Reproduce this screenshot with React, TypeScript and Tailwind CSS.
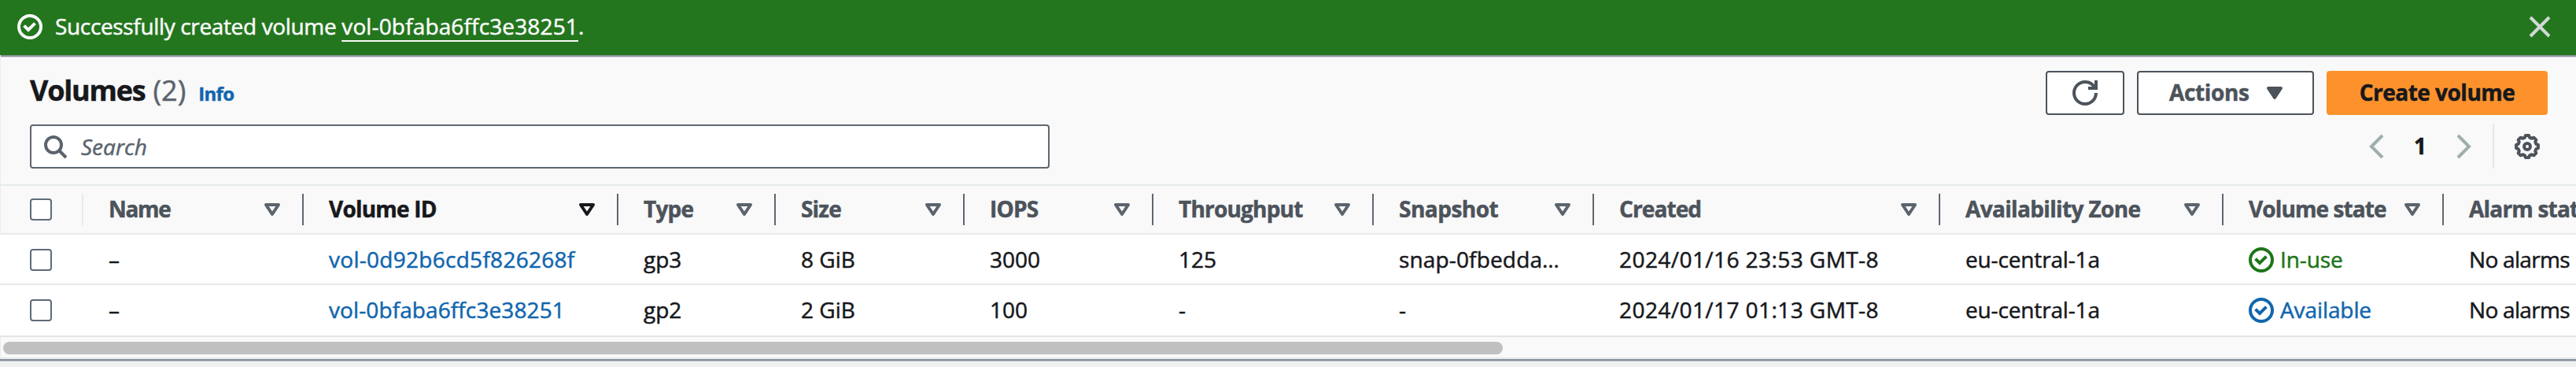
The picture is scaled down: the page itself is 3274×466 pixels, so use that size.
import type { ReactNode } from "react";

function Svg({ className, children }: { className?: string; children: ReactNode }) {
  return (
    <svg viewBox="0 0 16 16" fill="none" stroke="currentColor" strokeWidth="2" className={"size-8 shrink-0 overflow-visible " + (className ?? "")}>
      {children}
    </svg>
  );
}

const CheckCircle = () => (
  <Svg>
    <circle cx="8" cy="8" r="7" />
    <path d="m5 8 2 2 3.521-3.521" strokeLinecap="square" />
  </Svg>
);

const Caret = ({ filled, className }: { filled?: boolean; className?: string }) => (
  <Svg className={className}>
    <path d="M4 5h8l-4 6z" strokeLinejoin="round" fill={filled ? "currentColor" : "none"} />
  </Svg>
);

const gearPath = (() => {
  const at = (r: number, deg: number) => {
    const a = (deg * Math.PI) / 180;
    return `${(8 + r * Math.sin(a)).toFixed(2)} ${(8 - r * Math.cos(a)).toFixed(2)}`;
  };
  const pts: string[] = [];
  for (let i = 0; i < 8; i++) {
    const a = i * 45;
    pts.push(at(7.05, a - 8.5), at(7.05, a + 8.5), at(5.9, a + 15), at(5.9, a + 30));
  }
  return "M" + pts.join("L") + "Z";
})();

const columns: { label: string; width: string; track: string; sorted?: boolean }[] = [
  { label: "Name", width: "w-[280px]", track: "tracking-[-1.3px]" },
  { label: "Volume ID", width: "w-[400px]", track: "tracking-[-0.8px]", sorted: true },
  { label: "Type", width: "w-[200px]", track: "tracking-[-0.8px]" },
  { label: "Size", width: "w-[240px]", track: "tracking-[-0.8px]" },
  { label: "IOPS", width: "w-[240px]", track: "tracking-[-0.8px]" },
  { label: "Throughput", width: "w-[280px]", track: "tracking-[-0.8px]" },
  { label: "Snapshot", width: "w-[280px]", track: "tracking-[-0.5px]" },
  { label: "Created", width: "w-[440px]", track: "tracking-[-0.9px]" },
  { label: "Availability Zone", width: "w-[360px]", track: "tracking-[-0.65px]" },
  { label: "Volume state", width: "w-[280px]", track: "tracking-[-0.9px]" },
  { label: "Alarm state", width: "w-[280px]", track: "tracking-[-0.8px]" },
];

const cellTrack = ["", "", "", "", "", "", "tracking-[0.15px]", "tracking-[0.43px]", "tracking-[-0.15px]", "", "tracking-[-0.7px]"];

const rows = [
  ["–", "vol-0d92b6cd5f826268f", "gp3", "8 GiB", "3000", "125", "snap-0fbedda…", "2024/01/16 23:53 GMT-8", "eu-central-1a", "In-use", "No alarms"],
  ["–", "vol-0bfaba6ffc3e38251", "gp2", "2 GiB", "100", "-", "-", "2024/01/17 01:13 GMT-8", "eu-central-1a", "Available", "No alarms"],
];

const Checkbox = () => <span className="ml-[38px] size-7 rounded-[4px] border-2 border-[#5f6b7a] bg-white" />;

function Cell({ text, index, row }: { text: string; index: number; row: number }) {
  if (index === 9) {
    return (
      <span className={"flex items-center gap-2 " + (text === "In-use" ? "text-[#1d7519]" : "text-[#1166ae]")}>
        <span className="pt-0.5"><CheckCircle /></span>
        <span className="tracking-[-0.1px]">{text}</span>
      </span>
    );
  }
  if (index === 1) {
    return <a className={"text-[#1166ae] " + (row === 0 ? "tracking-[0.28px]" : "tracking-[0.1px]")}>{text}</a>;
  }
  return <span className={cellTrack[index]}>{text}</span>;
}

export default function App() {
  return (
    <div className="flex h-[466px] w-[3274px] flex-col overflow-hidden bg-[#f0f1f1] font-['Open_Sans','Noto_Sans',sans-serif] text-[28px] leading-9 text-[#17181c] [-webkit-text-stroke:0.5px]">
      <div className="flex h-[70px] shrink-0 items-center bg-[#23761e] pr-[30px] pl-[22px] text-[#fafafa]">
        <div className="-mt-1"><div className="pt-0.5"><CheckCircle /></div></div>
        <p className="ml-4 flex-1 -mt-1 tracking-[-0.35px]">
          Successfully created volume{" "}
          <a className="tracking-[0.14px] underline decoration-2 underline-offset-[7px] [text-decoration-skip-ink:none]">vol-0bfaba6ffc3e38251</a>.
        </p>
        <Svg className="-mt-0.5 text-[#d2d8d6]">
          <path d="M2 2l12 12M14 2 2 14" />
        </Svg>
      </div>

      <div className="flex h-[384px] shrink-0 flex-col border-l border-[#eceded] bg-[#f9f9f9]">
        <div className="h-0.5 shrink-0 bg-[#8f949c]" />
        <div className="h-px shrink-0 bg-[#d9dbde]" />

        <div className="mt-[17px] flex h-14 shrink-0 items-center justify-between pr-9 pl-[37px]">
          <div className="-mt-[3px] flex items-baseline leading-[48px]">
            <h1 className="text-[36px] font-bold tracking-[-1.2px]">Volumes</h1>
            <span className="ml-2.5 text-[36px] text-[#5b646d]">(2)</span>
            <a className="ml-4 text-[24px] font-bold tracking-[-0.7px] text-[#1166ae]">Info</a>
          </div>
          <div className="flex gap-4 font-bold text-[#4c535b]">
            <button className="flex h-14 w-[100px] items-center justify-center rounded-[4px] border-2 border-[#4c535b] bg-white">
              <Svg>
                <path d="M15 8c0 3.87-3.13 7-7 7s-7-3.13-7-7 3.13-7 7-7c2.79 0 5.2 1.63 6.33 4" />
                <path d="M10 5h5V0" />
              </Svg>
            </button>
            <button className="flex h-14 w-[225px] items-center rounded-[4px] border-2 border-[#4c535b] bg-white pl-[39px]">
              <span className="-mt-0.5 w-[118px] text-left tracking-[-0.35px]">Actions</span>
              <Caret filled />
            </button>
            <button className="flex h-14 w-[281px] items-center justify-center rounded-[4px] bg-[#fd922c] text-[#17181c]">
              <span className="-mt-0.5 tracking-[-0.5px]">Create volume</span>
            </button>
          </div>
        </div>

        <div className="mt-3 flex h-14 shrink-0 items-center justify-between pr-[46px] pl-[37px]">
          <div className="flex h-14 w-[1296px] items-center rounded-[4px] border-2 border-[#5f6770] bg-white pl-3.5 text-[#5b646d]">
            <Svg>
              <circle cx="7" cy="7" r="5" />
              <path d="m15 15-4.5-4.5" />
            </Svg>
            <span className="ml-[17px] italic">Search</span>
          </div>
          <div className="flex h-14 items-center">
            <Svg className="text-[#9fadad]">
              <path d="M11 1 4 8l7 7" />
            </Svg>
            <span className="-mt-0.5 w-[76px] text-center font-bold">1</span>
            <Svg className="text-[#9fadad]">
              <path d="m5 1 7 7-7 7" />
            </Svg>
            <span className="ml-[22px] h-14 w-0.5 bg-[#e4e7e7]" />
            <Svg className="ml-[26px] text-[#4c535b]">
              <path d={gearPath} strokeLinejoin="round" />
              <circle cx="8" cy="8" r="2" />
            </Svg>
          </div>
        </div>

        <div className="mt-5 -ml-px flex h-16 w-[3400px] shrink-0 items-center border-y-2 border-[#e6ebea]">
          <div className="flex h-10 w-[106px] items-center border-r-2 border-[#e6ebea]">
            <Checkbox />
          </div>
          {columns.map((c) => (
            <div key={c.label} className={"flex h-10 shrink-0 items-center justify-between border-r-2 border-[#5f6770] pr-[22px] pl-8 " + c.width}>
              <span className={"-mt-0.5 font-bold whitespace-nowrap " + c.track + (c.sorted ? " text-[#17181c]" : " text-[#4c535b]")}>{c.label}</span>
              <Caret className={c.sorted ? "text-[#17181c]" : "text-[#5b646d]"} />
            </div>
          ))}
        </div>

        {rows.map((r, i) => (
          <div key={r[1]} className={"-ml-px flex w-[3400px] shrink-0 items-center border-b-2 bg-white " + (i === 0 ? "h-16 border-[#e6ebea]" : "h-[66px] border-[#e4e5e5] pb-0.5")}>
            <div className="flex w-[106px] shrink-0 pt-0.5">
              <Checkbox />
            </div>
            {r.map((text, j) => (
              <div key={j} className={"shrink-0 pl-8 whitespace-nowrap " + columns[j].width}>
                <Cell text={text} index={j} row={i} />
              </div>
            ))}
          </div>
        ))}

        <div className="mt-1.5 ml-[3px] h-4 w-[1906px] shrink-0 rounded-full bg-[#c0c0c0]" />
      </div>
      <div className="h-0.5 shrink-0 bg-[#e6e7e9]" />
      <div className="h-0.5 shrink-0 bg-[#858e98]" />
      <div className="h-px shrink-0 bg-[#c3c7cb]" />
    </div>
  );
}
